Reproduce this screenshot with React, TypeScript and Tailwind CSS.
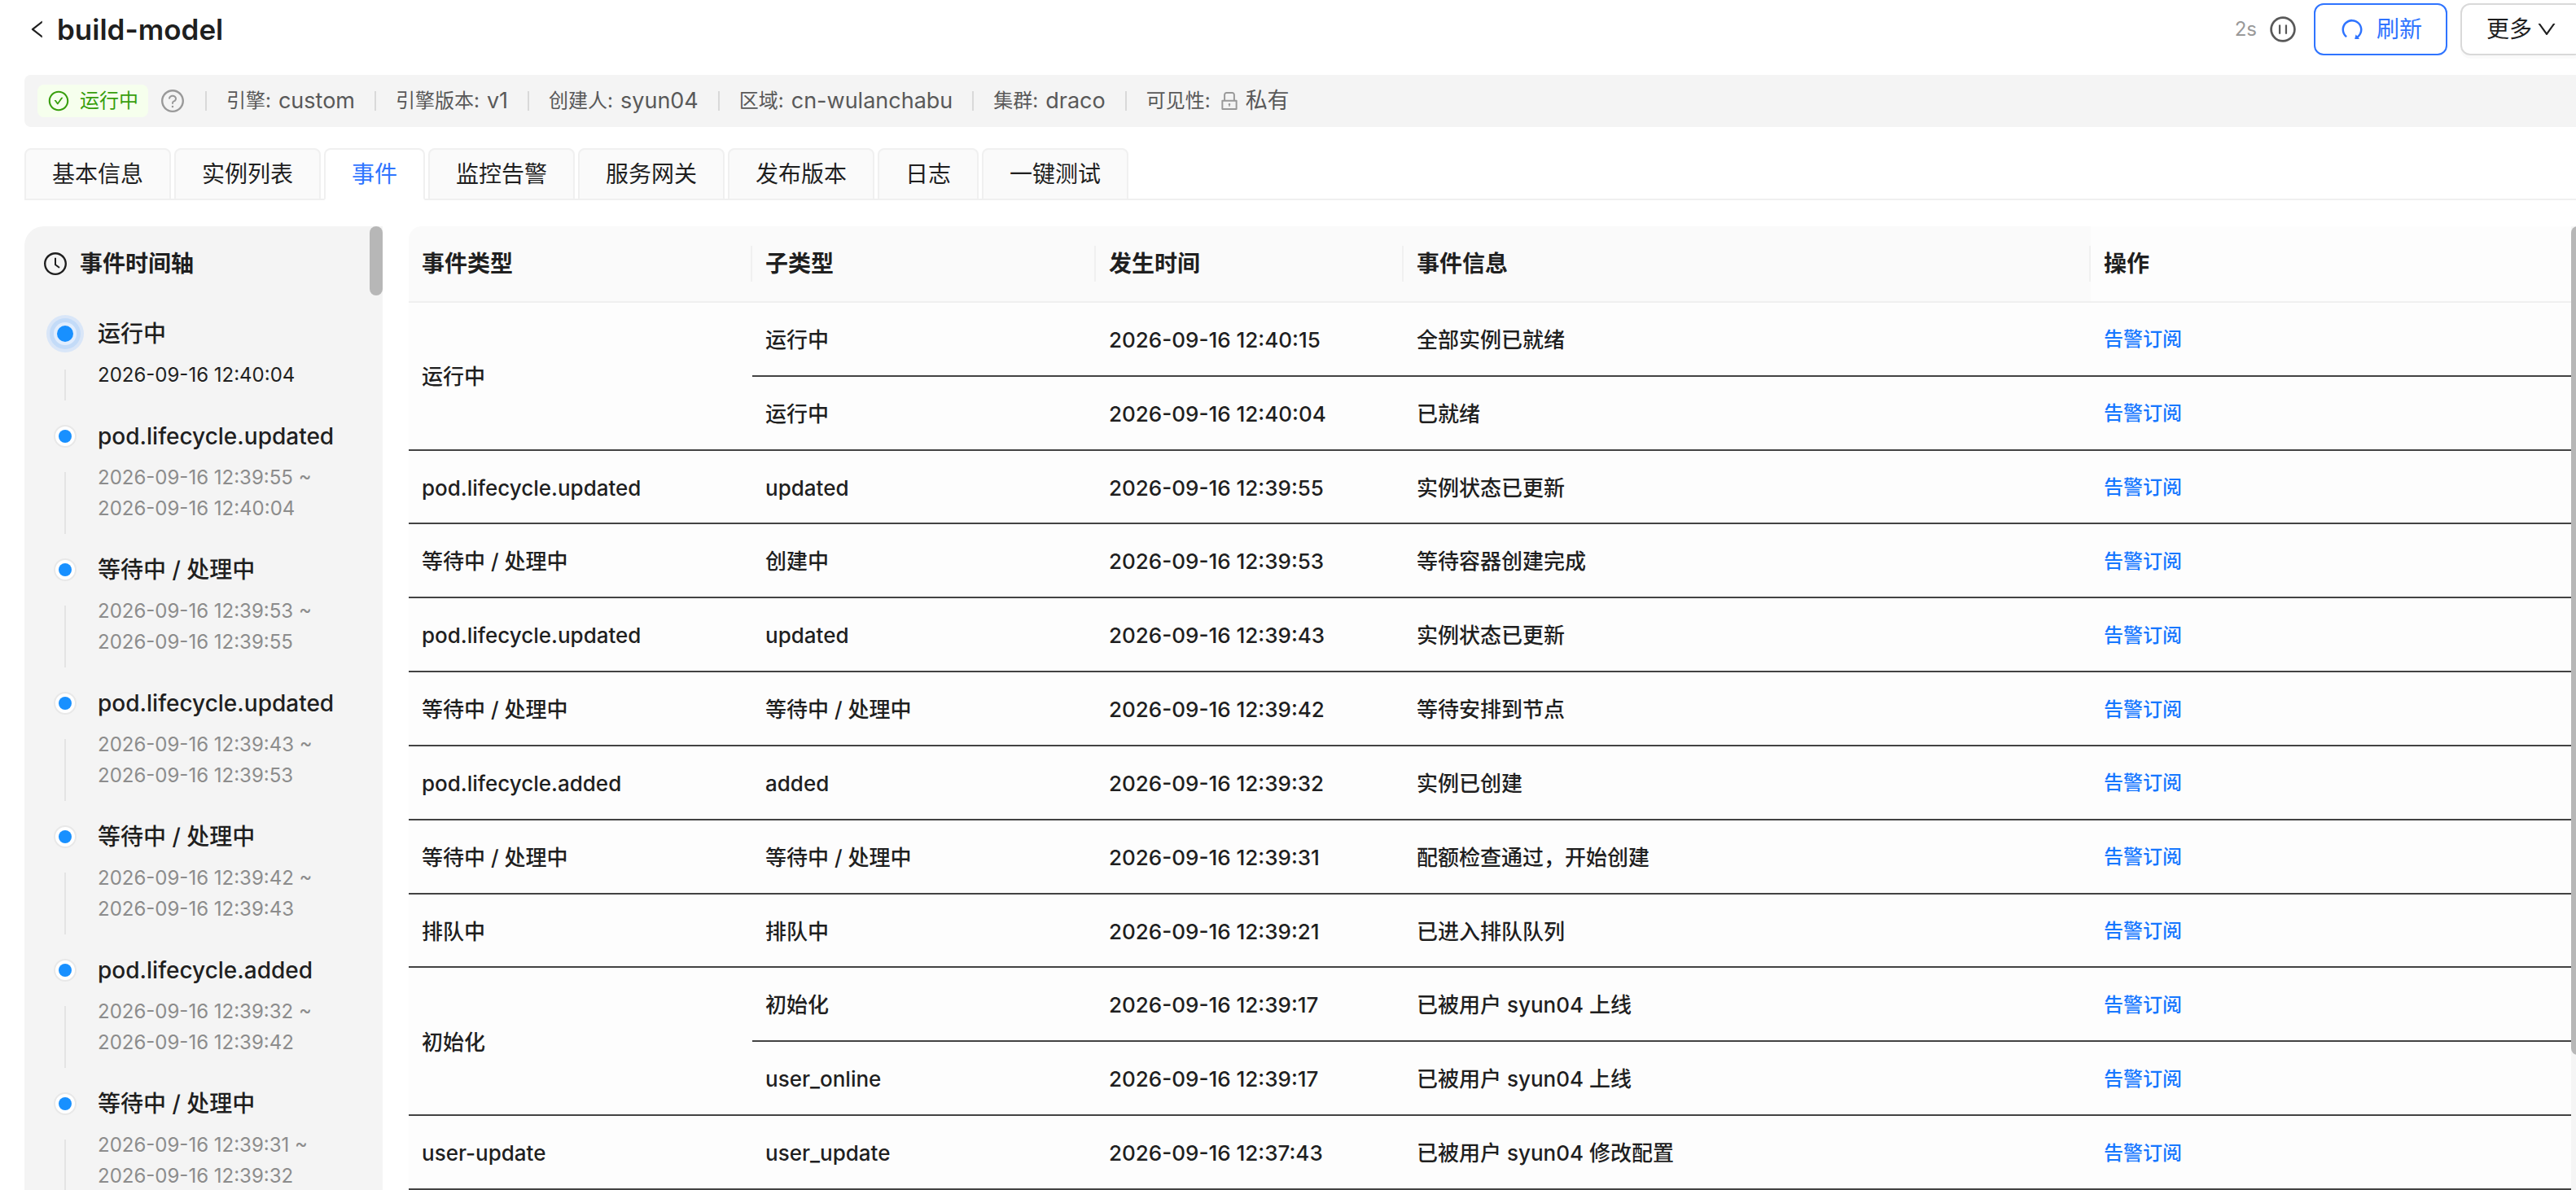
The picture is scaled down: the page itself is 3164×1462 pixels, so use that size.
import { Fragment, useState } from 'react';
import {
  AiOutlineCheckCircle,
  AiOutlineClockCircle,
  AiOutlineDown,
  AiOutlineLeft,
  AiOutlineLock,
  AiOutlinePauseCircle,
  AiOutlineQuestionCircle,
  AiOutlineRedo,
} from 'react-icons/ai';

interface EventRow {
  type?: string;
  span?: number;
  subType: string;
  time: string;
  message: string;
}

interface TimelineItem {
  title: string;
  times: string[];
}

const tabs = ['基本信息', '实例列表', '事件', '监控告警', '服务网关', '发布版本', '日志', '一键测试'];

const meta = [
  { label: '引擎:', value: 'custom' },
  { label: '引擎版本:', value: 'v1' },
  { label: '创建人:', value: 'syun04' },
  { label: '区域:', value: 'cn-wulanchabu' },
  { label: '集群:', value: 'draco' },
  { label: '可见性:', value: '私有', locked: true },
];

const timeline: TimelineItem[] = [
  { title: '运行中', times: ['2026-09-16 12:40:04'] },
  { title: 'pod.lifecycle.updated', times: ['2026-09-16 12:39:55 ~', '2026-09-16 12:40:04'] },
  { title: '等待中 / 处理中', times: ['2026-09-16 12:39:53 ~', '2026-09-16 12:39:55'] },
  { title: 'pod.lifecycle.updated', times: ['2026-09-16 12:39:43 ~', '2026-09-16 12:39:53'] },
  { title: '等待中 / 处理中', times: ['2026-09-16 12:39:42 ~', '2026-09-16 12:39:43'] },
  { title: 'pod.lifecycle.added', times: ['2026-09-16 12:39:32 ~', '2026-09-16 12:39:42'] },
  { title: '等待中 / 处理中', times: ['2026-09-16 12:39:31 ~', '2026-09-16 12:39:32'] },
];

// A row without a type belongs to the spanning cell above it
const rows: EventRow[] = [
  { type: '运行中', span: 2, subType: '运行中', time: '2026-09-16 12:40:15', message: '全部实例已就绪' },
  { subType: '运行中', time: '2026-09-16 12:40:04', message: '已就绪' },
  { type: 'pod.lifecycle.updated', subType: 'updated', time: '2026-09-16 12:39:55', message: '实例状态已更新' },
  { type: '等待中 / 处理中', subType: '创建中', time: '2026-09-16 12:39:53', message: '等待容器创建完成' },
  { type: 'pod.lifecycle.updated', subType: 'updated', time: '2026-09-16 12:39:43', message: '实例状态已更新' },
  { type: '等待中 / 处理中', subType: '等待中 / 处理中', time: '2026-09-16 12:39:42', message: '等待安排到节点' },
  { type: 'pod.lifecycle.added', subType: 'added', time: '2026-09-16 12:39:32', message: '实例已创建' },
  { type: '等待中 / 处理中', subType: '等待中 / 处理中', time: '2026-09-16 12:39:31', message: '配额检查通过，开始创建' },
  { type: '排队中', subType: '排队中', time: '2026-09-16 12:39:21', message: '已进入排队队列' },
  { type: '初始化', span: 2, subType: '初始化', time: '2026-09-16 12:39:17', message: '已被用户 syun04 上线' },
  { subType: 'user_online', time: '2026-09-16 12:39:17', message: '已被用户 syun04 上线' },
  { type: 'user-update', subType: 'user_update', time: '2026-09-16 12:37:43', message: '已被用户 syun04 修改配置' },
];

const columns = [
  { title: '事件类型', className: 'w-[422px] bg-[#fafafa]' },
  { title: '子类型', className: 'w-[422px] bg-[#fafafa]' },
  { title: '发生时间', className: 'w-[378px] bg-[#fafafa]' },
  { title: '事件信息', className: 'w-[844px] bg-[#fafafa]' },
  { title: '操作', className: 'bg-[#fdfdfd]' },
];

function PageHeader() {
  return (
    <header className="flex h-[72px] items-center justify-between">
      <div className="flex items-center gap-2.5 pl-0.5">
        <button aria-label="返回">
          <AiOutlineLeft className="size-7" />
        </button>
        <h1 className="text-[35px] leading-[44px] font-semibold">build-model</h1>
      </div>
      <div className="flex items-center gap-4">
        <div className="flex items-center gap-3.5 pr-1">
          <span className="text-2xl text-[#999999]">2s</span>
          <button aria-label="暂停" className="text-[#595959]">
            <AiOutlinePauseCircle className="size-9" />
          </button>
        </div>
        <button className="flex h-16 items-center gap-3.5 rounded-xl border-2 border-[#2f74ff] px-[29px] text-[28px] text-[#2f74ff]">
          <AiOutlineRedo className="size-8" />
          刷新
        </button>
        <button className="flex h-16 items-center gap-1 rounded-xl border-2 border-[#d9d9d9] px-[30px] text-[28px] shadow-[0_4px_0_rgba(0,0,0,0.02)]">
          更多
          <AiOutlineDown className="size-7" />
        </button>
      </div>
    </header>
  );
}

function InfoBar() {
  return (
    <div className="mt-5 flex h-16 items-center rounded-lg bg-[#f4f4f4] px-4 text-[#595959]">
      <span className="flex h-10 items-center gap-3 rounded-lg bg-[#f6ffed] px-3 text-2xl text-[#389e0d]">
        <AiOutlineCheckCircle className="size-7" />
        运行中
      </span>
      <AiOutlineQuestionCircle className="ml-3.5 size-8 text-[#999999]" />
      {meta.map((item) => (
        <Fragment key={item.label}>
          <span className="mx-6 h-6 w-0.5 bg-[#d9d9d9]" />
          <span className="flex items-center gap-[9px]">
            <span className="text-2xl">{item.label}</span>
            <span className="flex items-center gap-1.5 text-[27px]">
              {item.locked && <AiOutlineLock className="size-7 text-[#999999]" />}
              {item.value}
            </span>
          </span>
        </Fragment>
      ))}
    </div>
  );
}

function Tabs() {
  const [active, setActive] = useState('事件');

  return (
    <div className="mt-[26px] flex gap-1 shadow-[inset_0_-2px_0_#f0f0f0]" role="tablist">
      {tabs.map((tab) => (
        <button
          key={tab}
          role="tab"
          aria-selected={tab === active}
          onClick={() => setActive(tab)}
          className={
            tab === active
              ? 'h-16 rounded-t-lg border-2 border-[#f0f0f0] border-b-white bg-white px-8 text-[28px] text-[#2f74ff]'
              : 'h-16 rounded-t-lg border-2 border-[#f0f0f0] bg-[#fafafa] px-8 text-[28px]'
          }
        >
          {tab}
        </button>
      ))}
    </div>
  );
}

function TimelineDot({ current }: { current: boolean }) {
  if (current) {
    return (
      <svg className="h-11 w-12 shrink-0 overflow-visible" viewBox="0 0 48 44">
        <circle cx="24" cy="22" r="23" fill="#d9e6f8" />
        <circle cx="24" cy="22" r="19" fill="#c3dbf8" />
        <circle cx="24" cy="22" r="14" fill="#e1edfd" />
        <circle cx="24" cy="22" r="10" fill="#1890ff" />
      </svg>
    );
  }
  return (
    <svg className="h-11 w-12 shrink-0" viewBox="0 0 48 44">
      <circle cx="24" cy="22" r="13" fill="#ffffff" stroke="#e8e8e8" strokeWidth="2" />
      <circle cx="24" cy="22" r="8" fill="#1890ff" />
    </svg>
  );
}

function Timeline() {
  return (
    <aside className="flex w-[440px] shrink-0 overflow-hidden rounded-tl-3xl bg-[#f4f4f4]">
      <div className="min-w-0 flex-1 pt-6 pl-[22px]">
        <h2 className="flex items-center gap-3.5 text-[28px] leading-[44px] font-semibold">
          <AiOutlineClockCircle className="size-8" />
          事件时间轴
        </h2>
        <ol className="mt-[42px] pl-1">
          {timeline.map((item, index) => (
            <li key={index} className="flex gap-4">
              <div className="flex w-12 flex-col items-center">
                <TimelineDot current={index === 0} />
                <span className="my-[22px] w-0.5 flex-1 bg-[#e4e4e4]" />
              </div>
              <div className="pb-[34px]">
                <h3 className="text-[28px] leading-[44px] font-medium">{item.title}</h3>
                <div
                  className={
                    index === 0
                      ? 'mt-2.5 text-2xl leading-[38px]'
                      : 'mt-2.5 text-2xl leading-[38px] text-[#8c8c8c]'
                  }
                >
                  {item.times.map((time) => (
                    <p key={time}>{time}</p>
                  ))}
                </div>
              </div>
            </li>
          ))}
        </ol>
      </div>
      <div className="h-[85px] w-4 rounded-lg bg-[#b7b7b7]" />
    </aside>
  );
}

function EventTable() {
  return (
    <table className="h-full w-full table-fixed border-separate border-spacing-0 text-left text-[26px] font-medium">
      <thead>
        <tr className="h-[94px]">
          {columns.map((col, index) => (
            <th
              key={col.title}
              className={`border-b-2 border-[#f0f0f0] p-0 text-[28px] font-semibold first:rounded-tl-2xl ${col.className}`}
            >
              <div
                className={
                  index < columns.length - 1
                    ? 'border-r-2 border-[#f0f0f0] px-4 leading-[44px]'
                    : 'px-4 leading-[44px]'
                }
              >
                {col.title}
              </div>
            </th>
          ))}
        </tr>
      </thead>
      <tbody>
        {rows.map((row, index) => (
          <tr key={index} className="bg-[#fdfdfd]">
            {row.type && (
              <td rowSpan={row.span} className="border-b-2 border-[#434343] px-4 pt-0.5">
                {row.type}
              </td>
            )}
            <td className="border-b-2 border-[#434343] px-4 pt-0.5">{row.subType}</td>
            <td className="border-b-2 border-[#434343] px-4 pt-0.5">{row.time}</td>
            <td className="border-b-2 border-[#434343] px-4 pt-0.5">{row.message}</td>
            <td className="border-b-2 border-[#434343] px-4 pt-0.5 text-2xl text-[#1677ff]">
              <a href="#subscribe">告警订阅</a>
            </td>
          </tr>
        ))}
      </tbody>
    </table>
  );
}

export default function App() {
  return (
    <div className="h-screen overflow-hidden bg-white font-['Inter','Noto_Sans_CJK_SC',sans-serif] text-[#1f1f1f]">
      {/* The content runs slightly past the right edge of the window */}
      <div className="-mr-2.5 flex h-full flex-col pl-[30px]">
        <PageHeader />
        <InfoBar />
        <Tabs />
        <main className="mt-8 flex min-h-0 flex-1 gap-8">
          <Timeline />
          <section className="flex min-w-0 flex-1">
            <div className="min-w-0 flex-1">
              <EventTable />
            </div>
            <div className="w-4 bg-[#f5f5f5]">
              <div className="h-[86%] rounded-lg bg-[#b7b7b7]" />
            </div>
          </section>
        </main>
      </div>
    </div>
  );
}
